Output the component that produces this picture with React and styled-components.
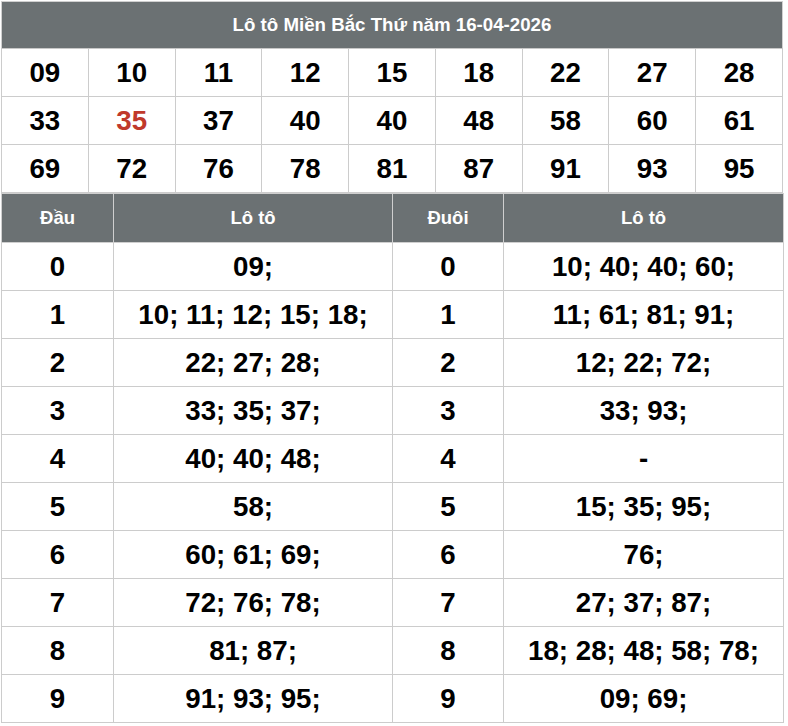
import React from "react";
import styled, { createGlobalStyle } from "styled-components";

const GlobalStyle = createGlobalStyle`
  html, body {
    margin: 0;
    padding: 0;
    background: #ffffff;
  }
  body {
    padding: 1px 0 0 1px;
    font-family: "Liberation Sans", Arial, sans-serif;
  }
`;

const Wrap = styled.div`
  width: 782px;
`;

const Table = styled.table`
  width: 100%;
  border-collapse: collapse;
  table-layout: fixed;
  font-family: "Liberation Sans", Arial, sans-serif;
`;

const Title = styled.th`
  background: #6b7173;
  color: #ffffff;
  font-size: 18.7px;
  font-weight: bold;
  height: 46px;
  padding: 0;
  border: 1px solid #d0d0d0;
  border-bottom-color: #c8c8c8;
`;

const HeadCell = styled.th`
  background: #6b7173;
  color: #ffffff;
  font-size: 18.5px;
  font-weight: bold;
  height: 48px;
  padding: 0;
  border: 1px solid #cfcfcf;
`;

const NumCell = styled.td`
  height: 47px;
  padding: 0;
  text-align: center;
  font-size: 27.7px;
  line-height: 1;
  font-weight: bold;
  color: ${(p) => (p.$hot ? "#c0392b" : "#000000")};
  border: 1px solid #cccccc;
`;

const rows = [
  ["09", "10", "11", "12", "15", "18", "22", "27", "28"],
  ["33", "35", "37", "40", "40", "48", "58", "60", "61"],
  ["69", "72", "76", "78", "81", "87", "91", "93", "95"],
];

const heads = [
  "09;",
  "10; 11; 12; 15; 18;",
  "22; 27; 28;",
  "33; 35; 37;",
  "40; 40; 48;",
  "58;",
  "60; 61; 69;",
  "72; 76; 78;",
  "81; 87;",
  "91; 93; 95;",
];

const tails = [
  "10; 40; 40; 60;",
  "11; 61; 81; 91;",
  "12; 22; 72;",
  "33; 93;",
  "-",
  "15; 35; 95;",
  "76;",
  "27; 37; 87;",
  "18; 28; 48; 58; 78;",
  "09; 69;",
];

export default function App() {
  return (
    <Wrap>
      <GlobalStyle />
      <Table>
        <thead>
          <tr>
            <Title colSpan={9}>Lô tô Miền Bắc Thứ năm 16-04-2026</Title>
          </tr>
        </thead>
        <tbody>
          {rows.map((r, i) => (
            <tr key={i}>
              {r.map((n, j) => (
                <NumCell key={j} $hot={n === "35" && i === 1}>
                  {n}
                </NumCell>
              ))}
            </tr>
          ))}
        </tbody>
      </Table>
      <Table>
        <colgroup>
          <col style={{ width: 112 }} />
          <col style={{ width: 279 }} />
          <col style={{ width: 111 }} />
          <col style={{ width: 280 }} />
        </colgroup>
        <thead>
          <tr>
            <HeadCell>Đầu</HeadCell>
            <HeadCell>Lô tô</HeadCell>
            <HeadCell>Đuôi</HeadCell>
            <HeadCell>Lô tô</HeadCell>
          </tr>
        </thead>
        <tbody>
          {heads.map((h, i) => (
            <tr key={i}>
              <NumCell>{i}</NumCell>
              <NumCell>{h}</NumCell>
              <NumCell>{i}</NumCell>
              <NumCell>{tails[i]}</NumCell>
            </tr>
          ))}
        </tbody>
      </Table>
    </Wrap>
  );
}
